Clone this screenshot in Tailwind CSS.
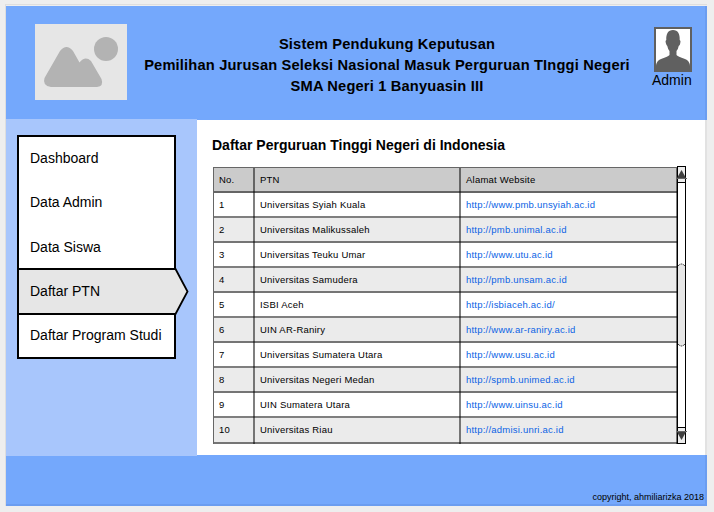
<!DOCTYPE html>
<html lang="id">
<head>
<meta charset="utf-8">
<title>Daftar Perguruan Tinggi Negeri</title>
<script src="https://cdn.jsdelivr.net/npm/@tailwindcss/browser@4"></script>
</head>
<body class="w-[714px] h-[512px] overflow-hidden bg-[#eeeeee] pt-[4px] pl-[5px] font-['Liberation_Sans',Arial,sans-serif] text-black">
<div class="w-[702px] h-[502px] border-t border-l border-[#dedede] pt-px bg-[#eeeeee]">
  <header class="h-[114px] w-[701px] flex items-start bg-[#74a8fc] border-r-2 border-[#6b9df0]">
    <svg class="ml-[29px] mt-[18px] shrink-0" width="92" height="76" viewBox="0 0 92 76">
      <rect width="92" height="76" fill="#e6e6e6"/>
      <circle cx="71" cy="25" r="12" fill="#b3b3b3"/>
      <path d="M25 27Q31.500 19 38 27L44.500 38.500Q50 31.500 56 37L66.500 55Q69 62 62 63H16Q7 61.500 9.500 54Z" fill="#b3b3b3"/>
    </svg>
    <h1 class="w-[520px] mt-[28px] text-center text-[14.67px] leading-[21px] tracking-[0.17px] font-bold whitespace-nowrap">Sistem Pendukung Keputusan<br>Pemilihan Jurusan Seleksi Nasional Masuk Perguruan TInggi Negeri<br>SMA Negeri 1 Banyuasin III</h1>
    <div class="mt-[21px] ml-[5px] w-[40px] flex flex-col">
      <svg class="ml-[2px]" width="38" height="45" viewBox="0 0 38 45">
        <rect x="1" y="1" width="36" height="43" fill="#fff" stroke="#606060" stroke-width="2"/>
        <path d="M19 3C14 3 12 7 12.300 13Q11 13.500 11.800 16Q12.500 18.500 13.300 19Q13.800 22 15.500 24V28Q14.500 29.500 7 32Q2.500 33.500 2 39V43H36V39Q35.500 33.500 31 32Q23.500 29.500 22.500 28V24Q24.200 22 24.700 19Q26 18.500 26.300 16Q27 13.500 25.700 13C26 7 24 3 19 3Z" fill="#606060"/>
      </svg>
      <span class="text-[14px] leading-[16px] whitespace-nowrap">Admin</span>
    </div>
  </header>
  <div class="flex w-[701px] h-[335px] bg-white border-r-2 border-[#e2e2e2]">
    <aside class="relative z-10 w-[191px] h-[337px] -mt-px shrink-0 bg-[#a8c6fc] pt-[16px] pl-[11px]">
      <nav class="w-[159px] h-[224px] border-2 border-black bg-white text-[14px] leading-[16px]">
        <a class="block h-[44px] pl-[11px] pt-[13px]">Dashboard</a>
        <a class="block h-[45px] pl-[11px] pt-[13px]">Data Admin</a>
        <a class="block h-[42px] pl-[11px] pt-[13px]">Data Siswa</a>
        <a class="relative block h-[47px] pl-[11px] pt-[13px] border-y-2 border-black bg-[#e6e6e6]">Daftar PTN
          <svg class="absolute left-[155px] -top-[2px]" width="15" height="47" viewBox="0 0 15 47">
            <path d="M0 1H2L13.500 23.500L2 46H0Z" fill="#e6e6e6"/>
            <path d="M0 1H1.500L13.500 23.500L1.500 46H0" fill="none" stroke="#000" stroke-width="1.800"/>
          </svg>
        </a>
        <a class="block h-[42px] pl-[11px] pt-[12px] whitespace-nowrap">Daftar Program Studi</a>
      </nav>
    </aside>
    <main class="pl-[15px] pt-[16px]">
      <h2 class="text-[14px] leading-[18px] font-bold whitespace-nowrap">Daftar Perguruan Tinggi Negeri di Indonesia</h2>
      <div class="flex mt-[12px] ml-px">
        <div id="table" class="mt-px w-[464px] h-[277px] border-t border-l border-[#666] text-[9.5px] leading-[12px] tracking-[0.22px] whitespace-nowrap"></div>
        <svg width="10" height="278" viewBox="0 0 10 278" shape-rendering="crispEdges">
          <rect x=".5" y=".5" width="8" height="277" fill="#fff" stroke="#000"/>
          <rect x=".5" y=".5" width="8" height="16" fill="#ececec" stroke="#000"/>
          <path d="M4.500 4L9 12H0Z" fill="#404040" shape-rendering="auto"/>
          <path d="M-.5 12.500H10" stroke="#666"/>
          <rect x="1" y="98" width="7" height="82" rx="3.500" fill="#e6e6e6"/>
          <path d="M1 100Q4.500 96 8 100M1 178Q4.500 182 8 178" fill="none" stroke="#333" stroke-dasharray="2 1" shape-rendering="auto"/>
          <rect x=".5" y="261.500" width="8" height="16" fill="#ececec" stroke="#000"/>
          <path d="M4.500 274L9 266H0Z" fill="#404040" shape-rendering="auto"/>
          <path d="M-.5 265.500H10" stroke="#666"/>
        </svg>
      </div>
    </main>
  </div>
  <footer class="w-[701px] h-[51px] flex items-end justify-end bg-[#74a8fc] border-r-2 border-b-2 border-[#6b9df0] pr-px pb-[1px]">
    <small class="text-[9px] leading-[11px]">copyright, ahmiliarizka 2018</small>
  </footer>
</div>
<script>
const rows = [
  ['No.', 'PTN', 'Alamat Website'],
  ['1', 'Universitas Syiah Kuala', 'http://www.pmb.unsyiah.ac.id'],
  ['2', 'Universitas Malikussaleh', 'http://pmb.unimal.ac.id'],
  ['3', 'Universitas Teuku Umar', 'http://www.utu.ac.id'],
  ['4', 'Universitas Samudera', 'http://pmb.unsam.ac.id'],
  ['5', 'ISBI Aceh', 'http://isbiaceh.ac.id/'],
  ['6', 'UIN AR-Raniry', 'http://www.ar-raniry.ac.id'],
  ['7', 'Universitas Sumatera Utara', 'http://www.usu.ac.id'],
  ['8', 'Universitas Negeri Medan', 'http://spmb.unimed.ac.id'],
  ['9', 'UIN Sumatera Utara', 'http://www.uinsu.ac.id'],
  ['10', 'Universitas Riau', 'http://admisi.unri.ac.id']
];
document.getElementById('table').innerHTML = rows.map((r, i) => {
  const bg = i === 0 ? 'bg-[#cbcbcb]' : i % 2 ? 'bg-white' : 'bg-[#ebebeb]';
  const h = i === 10 ? 'h-[26px]' : 'h-[25px]';
  const link = i ? 'text-[#0b63e5]' : '';
  return `<div class="flex items-start border-b-2 border-black/50 ${h} ${bg}">
    <div class="w-[41px] ${h} border-r-2 border-black/50 pl-[5px] pt-[6px]">${r[0]}</div>
    <div class="w-[206px] ${h} border-r-2 border-black/50 pl-[5px] pt-[6px]">${r[1]}</div>
    <div class="w-[216px] ${h} border-r border-black/50 pl-[5px] pt-[6px] ${link}">${r[2]}</div></div>`;
}).join('');
</script>
</body>
</html>
